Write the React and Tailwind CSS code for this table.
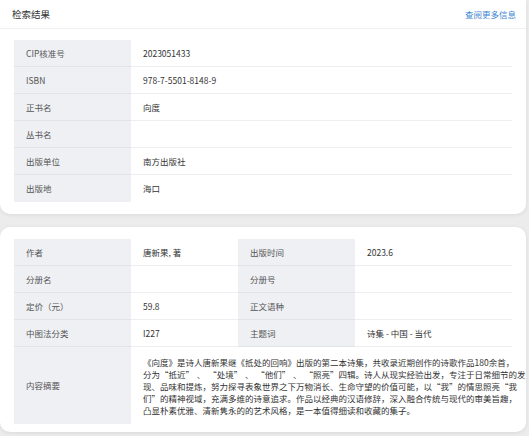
import React from "react";

const font = { fontFamily: '"Noto Sans CJK SC", "Noto Sans", sans-serif' };

const basicRows = [
  ["CIP核准号", "2023051433"],
  ["ISBN", "978-7-5501-8148-9"],
  ["正书名", "向度"],
  ["丛书名", ""],
  ["出版单位", "南方出版社"],
  ["出版地", "海口"],
];

const pairRows = [
  ["作者", "唐新果, 著", "出版时间", "2023.6"],
  ["分册名", "", "分册号", ""],
  ["定价（元）", "59.8", "正文语种", ""],
  ["中图法分类", "I227", "主题词", "诗集 - 中国 - 当代"],
];

const summary = [
  "《向度》是诗人唐新果继《抵处的回响》出版的第二本诗集，共收录近期创作的诗歌作品180余首，",
  "分为“抵近”、“处境”、“他们”、“照亮”四辑。诗人从现实经验出发，专注于日常细节的发",
  "现、品味和提炼，努力探寻表象世界之下万物消长、生命守望的价值可能，以“我”的情思照亮“我",
  "们”的精神视域，充满多维的诗意追求。作品以经典的汉语修辞，深入融合传统与现代的审美旨趣，",
  "凸显朴素优雅、清新隽永的的艺术风格，是一本值得细读和收藏的集子。",
];

// quotes take a full em box, like the reference's CJK font
const withWideQuotes = (line) =>
  line.split(/(“|”、|”)/).map((part, i) => {
    if (part === "“")
      return (
        <span key={i} className="inline-block w-[1em] text-right">
          {part}
        </span>
      );
    if (part === "”")
      return (
        <span key={i} className="inline-block w-[1em] text-left">
          {part}
        </span>
      );
    if (part === "”、")
      return (
        <React.Fragment key={i}>
          <span className="inline-block w-[1em] text-left">”</span>
          <span className="mx-[0.33em]">、</span>
        </React.Fragment>
      );
    return part;
  });

const Label = ({ children, last }) => (
  <div
    className={`bg-[#eef0f4] px-3 flex items-center text-[#555] ${
      last ? "" : "border-b border-[#e2e4e8]"
    }`}
  >
    {children}
  </div>
);

const Value = ({ children, last }) => (
  <div
    className={`px-3 flex items-center text-[#333] ${
      last ? "" : "border-b border-[#eceef1]"
    }`}
  >
    {children}
  </div>
);

const App = () => {
  return (
    <div
      className="w-[529px] h-[436px] bg-[#ececec] overflow-hidden text-[8.5px]"
      style={font}
    >
      <div className="w-[526px] bg-white rounded-b-[10px] shadow-[0_1px_4px_rgba(0,0,0,0.08)]">
        <div className="h-[29px] border-b border-[#f0f1f3] flex items-center justify-between pl-3 pr-[10px]">
          <span className="text-[9.5px] text-[#333]">检索结果</span>
          <span className="text-[#3d86d4]">查阅更多信息</span>
        </div>
        <div className="px-[14px] pt-[11px] pb-[12px]">
          <div className="grid grid-cols-[117px_1fr] auto-rows-[27px]">
            {basicRows.map(([k, v], i) => (
              <React.Fragment key={k}>
                <Label last={i === basicRows.length - 1}>{k}</Label>
                <Value last={i === basicRows.length - 1}>{v}</Value>
              </React.Fragment>
            ))}
          </div>
        </div>
      </div>

      <div className="mt-[13px] w-[526px] bg-white rounded-[10px] px-[14px] pt-3 pb-2 shadow-[0_1px_4px_rgba(0,0,0,0.08)]">
        <div className="grid grid-cols-[117px_107px_117px_1fr] grid-rows-[27px_27px_27px_27px_77px]">
          {pairRows.map(([k1, v1, k2, v2]) => (
            <React.Fragment key={k1}>
              <Label>{k1}</Label>
              <Value>{v1}</Value>
              <Label>{k2}</Label>
              <Value>{v2}</Value>
            </React.Fragment>
          ))}
          <div className="bg-[#eef0f4] px-3 flex items-center text-[#555]">
            内容摘要
          </div>
          <div className="col-span-3 px-3 flex flex-col justify-center text-[#333] leading-[12px]">
            {summary.map((line) => (
              <div key={line} className="whitespace-nowrap">
                {withWideQuotes(line)}
              </div>
            ))}
          </div>
        </div>
      </div>
    </div>
  );
};

export default App;
